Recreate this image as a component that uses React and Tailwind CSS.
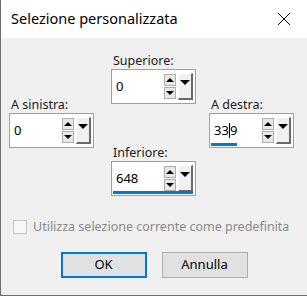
import React from "react";

function Tri({ down = false, size = 4 }) {
  return (
    <div
      className={
        "w-0 h-0 border-l-transparent border-r-transparent " +
        (down ? "border-t-black" : "border-b-black")
      }
      style={{
        borderLeftWidth: size,
        borderRightWidth: size,
        [down ? "borderTopWidth" : "borderBottomWidth"]: size,
      }}
    />
  );
}

function SpinBox({ value, cursor, bar }) {
  return (
    <div className="relative w-[85px] h-[35px] bg-white border border-[#a0a0a0] flex items-center">
      <div className="flex-1 pl-[4px] text-[13px] text-black leading-none">
        {cursor ? (
          <span>
            33<span className="inline-block w-px h-[15px] bg-black align-[-3px]" />9
          </span>
        ) : (
          value
        )}
      </div>
      <div className="flex flex-col gap-[1px] mr-[2px]">
        <div className="w-[12px] h-[12px] border border-[#adadad] bg-[#e8e8e8] flex items-center justify-center">
          <Tri size={4} />
        </div>
        <div className="w-[12px] h-[12px] border border-[#adadad] bg-[#e8e8e8] flex items-center justify-center">
          <Tri down size={4} />
        </div>
      </div>
      <div className="w-[15px] h-[27px] mr-[2px] bg-[#f0f0f0] border-t border-l border-t-white border-l-white border-r-2 border-b-2 border-r-[#696969] border-b-[#696969] flex items-start justify-center pt-[6px]">
        <Tri down size={5} />
      </div>
      {bar === "short" && (
        <div className="absolute left-[1px] bottom-[1px] w-[26px] h-[3px] bg-[#0078d7]" />
      )}
      {bar === "full" && (
        <div className="absolute left-[1px] right-[2px] bottom-[1px] h-[3px] bg-[#0078d7]" />
      )}
    </div>
  );
}

function Field({ label, children }) {
  return (
    <div className="flex flex-col">
      <div className="text-[12.5px] text-[#1a1a1a] leading-[16px] pl-[2px]">{label}</div>
      {children}
    </div>
  );
}

export default function App() {
  return (
    <div
      className="w-[307px] h-[296px] flex flex-col bg-[#f0f0f0] border-l border-b border-[#6e6e6e] overflow-hidden"
      style={{ fontFamily: '"Noto Sans", "Open Sans", sans-serif' }}
    >
      <div className="h-[38px] bg-white flex items-center justify-between pl-[10px] pr-[16px] shrink-0">
        <span className="text-[14.5px] text-black">Selezione personalizzata</span>
        <svg width="14" height="14" viewBox="0 0 14 14">
          <path d="M1 1L13 13M13 1L1 13" stroke="#000" strokeWidth="1" />
        </svg>
      </div>

      <div className="flex pl-[8px] pt-[15px]">
        <div className="pt-[44px]">
          <Field label="A sinistra:">
            <SpinBox value="0" />
          </Field>
        </div>
        <div className="ml-[17px] flex flex-col gap-[41px]">
          <Field label="Superiore:">
            <SpinBox value="0" />
          </Field>
          <Field label="Inferiore:">
            <SpinBox value="648" bar="full" />
          </Field>
        </div>
        <div className="ml-[13px] pt-[44px]">
          <Field label="A destra:">
            <SpinBox cursor bar="short" />
          </Field>
        </div>
      </div>

      <div className="flex items-center pl-[12px] mt-[22px]">
        <div className="w-[14px] h-[14px] border border-[#c5c5c5] bg-[#f7f7f7]" />
        <span className="ml-[6px] text-[12.5px] text-[#8a8a8a]">Utilizza selezione corrente come predefinita</span>
      </div>

      <div className="flex justify-center gap-[15px] mt-[15px]">
        <button className="w-[86px] h-[26px] bg-[#e1e1e1] border-2 border-[#0078d7] text-[13px] text-black">OK</button>
        <button className="w-[86px] h-[26px] bg-[#e1e1e1] border border-[#adadad] text-[13px] text-black">Annulla</button>
      </div>
    </div>
  );
}
